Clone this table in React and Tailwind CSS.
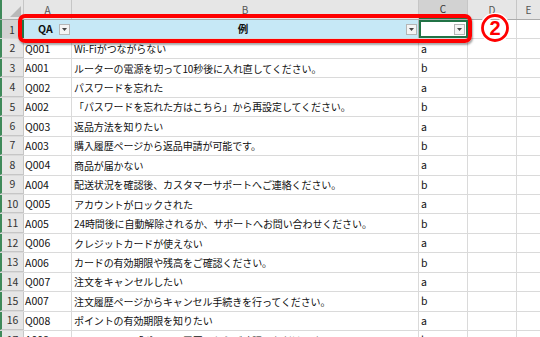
import React from "react";

const rows = [
  ["Q001", "Wi-Fiがつながらない", "a"],
  ["A001", "ルーターの電源を切って10秒後に入れ直してください。", "b"],
  ["Q002", "パスワードを忘れた", "a"],
  ["A002", "「パスワードを忘れた方はこちら」から再設定してください。", "b"],
  ["Q003", "返品方法を知りたい", "a"],
  ["A003", "購入履歴ページから返品申請が可能です。", "b"],
  ["Q004", "商品が届かない", "a"],
  ["A004", "配送状況を確認後、カスタマーサポートへご連絡ください。", "b"],
  ["Q005", "アカウントがロックされた", "a"],
  ["A005", "24時間後に自動解除されるか、サポートへお問い合わせください。", "b"],
  ["Q006", "クレジットカードが使えない", "a"],
  ["A006", "カードの有効期限や残高をご確認ください。", "b"],
  ["Q007", "注文をキャンセルしたい", "a"],
  ["A007", "注文履歴ページからキャンセル手続きを行ってください。", "b"],
  ["Q008", "ポイントの有効期限を知りたい", "a"],
  ["A008", "マイページの「ポイント履歴」からご確認いただけます。", "b"],
];

function DropBtn() {
  return (
    <div className="w-[11px] h-[11px] border border-[#b5b5b5] bg-[#f4f4f4] flex items-center justify-center shrink-0">
      <svg width="5" height="3" viewBox="0 0 5 3">
        <path d="M0 0 L5 0 L2.5 3 Z" fill="#444" />
      </svg>
    </div>
  );
}

export default function App() {
  const font = { fontFamily: '"Noto Sans CJK JP", "Noto Sans", sans-serif' };
  return (
    <div className="relative w-[540px] h-[337px] overflow-hidden bg-white text-[#111]" style={font}>
      {/* column header row */}
      <div className="flex h-[20px] bg-[#e6e6e6] border-b border-[#ababab]">
        <div className="w-[24px] shrink-0 border-r border-[#c6c6c6] border-l-2 border-l-[#3f8a5a] relative">
          <svg className="absolute right-[2px] bottom-[2px]" width="11" height="11" viewBox="0 0 11 11">
            <path d="M11 0 L11 11 L0 11 Z" fill="#b9b9b9" />
          </svg>
        </div>
        <div className="w-[48px] shrink-0 border-r border-[#c6c6c6] flex items-center justify-center text-[10px] text-[#555]">A</div>
        <div className="w-[347px] shrink-0 border-r border-[#c6c6c6] flex items-center justify-center text-[10px] text-[#555]">B</div>
        <div className="w-[49px] shrink-0 border-r border-[#c6c6c6] bg-[#d2d2d2] border-b-2 border-b-[#217346] flex items-center justify-center text-[10px] text-[#333]">C</div>
        <div className="w-[49px] shrink-0 border-r border-[#c6c6c6] flex items-center justify-center text-[10px] text-[#555]">D</div>
        <div className="flex-1 flex items-center justify-center text-[10px] text-[#555]">E</div>
      </div>

      {/* row 1 header */}
      <div className="flex h-[19.45px] border-b border-[#dadada]">
        <div className="w-[24px] shrink-0 bg-[#d2d2d2] border-r-2 border-r-[#217346] border-l-2 border-l-[#3f8a5a] flex items-center justify-center text-[10px] text-[#333]">1</div>
        <div className="w-[48px] shrink-0 bg-[#c6e8f6] border-r border-[#c6e8f6] flex items-center pl-[14px] pr-[1px] justify-between">
          <span className="text-[10.5px] font-bold">QA</span>
          <DropBtn />
        </div>
        <div className="w-[347px] shrink-0 bg-[#c6e8f6] border-r border-[#b0b0b0] flex items-center pr-[1px]">
          <span className="flex-1 text-center text-[10.5px] font-bold pl-[8px]">例</span>
          <DropBtn />
        </div>
        <div className="w-[49px] shrink-0 bg-white border-2 border-[#217346] flex items-center justify-end pr-[1px]">
          <DropBtn />
        </div>
        <div className="w-[49px] shrink-0 border-r border-[#dadada]" />
        <div className="flex-1" />
      </div>

      {rows.map((r, i) => (
        <div key={i} className="flex h-[19.45px] border-b border-[#dadada]">
          <div className="w-[24px] shrink-0 bg-[#e6e6e6] border-r border-[#c6c6c6] border-b border-b-[#c6c6c6] border-l-2 border-l-[#3f8a5a] flex items-center justify-center text-[10.5px] text-[#333]">
            {i + 2}
          </div>
          <div className="w-[48px] shrink-0 border-r border-[#dadada] flex items-center pl-[1px] text-[10.5px] whitespace-nowrap overflow-hidden">
            {r[0]}
          </div>
          <div className="w-[347px] shrink-0 border-r border-[#dadada] flex items-center pl-[2px] text-[10px] tracking-[-0.1px] whitespace-nowrap overflow-hidden">
            {r[1]}
          </div>
          <div className="w-[49px] shrink-0 border-r border-[#dadada] flex items-center pl-[2px] text-[10.5px]">
            {r[2]}
          </div>
          <div className="w-[49px] shrink-0 border-r border-[#dadada]" />
          <div className="flex-1" />
        </div>
      ))}

      {/* red highlight box */}
      <div className="absolute left-[18px] top-[14px] w-[454px] h-[29px] border-4 border-[#ff0000] rounded-[7px] shadow-[1px_2px_2px_rgba(0,0,0,0.35)]" />

      {/* circled 2 */}
      <svg className="absolute left-[479px] top-[12px]" width="32" height="32" viewBox="0 0 32 32">
        <circle cx="16" cy="16" r="12.5" fill="none" stroke="#ffffff" strokeWidth="5.5" />
        <circle cx="16" cy="16" r="12.5" fill="none" stroke="#ff0000" strokeWidth="2.8" />
        <text x="16" y="23" textAnchor="middle" fontSize="20" fontWeight="700" fill="#ff0000" stroke="#ffffff" strokeWidth="1" paintOrder="stroke" style={{ fontFamily: '"Liberation Sans", sans-serif' }}>2</text>
      </svg>
    </div>
  );
}
